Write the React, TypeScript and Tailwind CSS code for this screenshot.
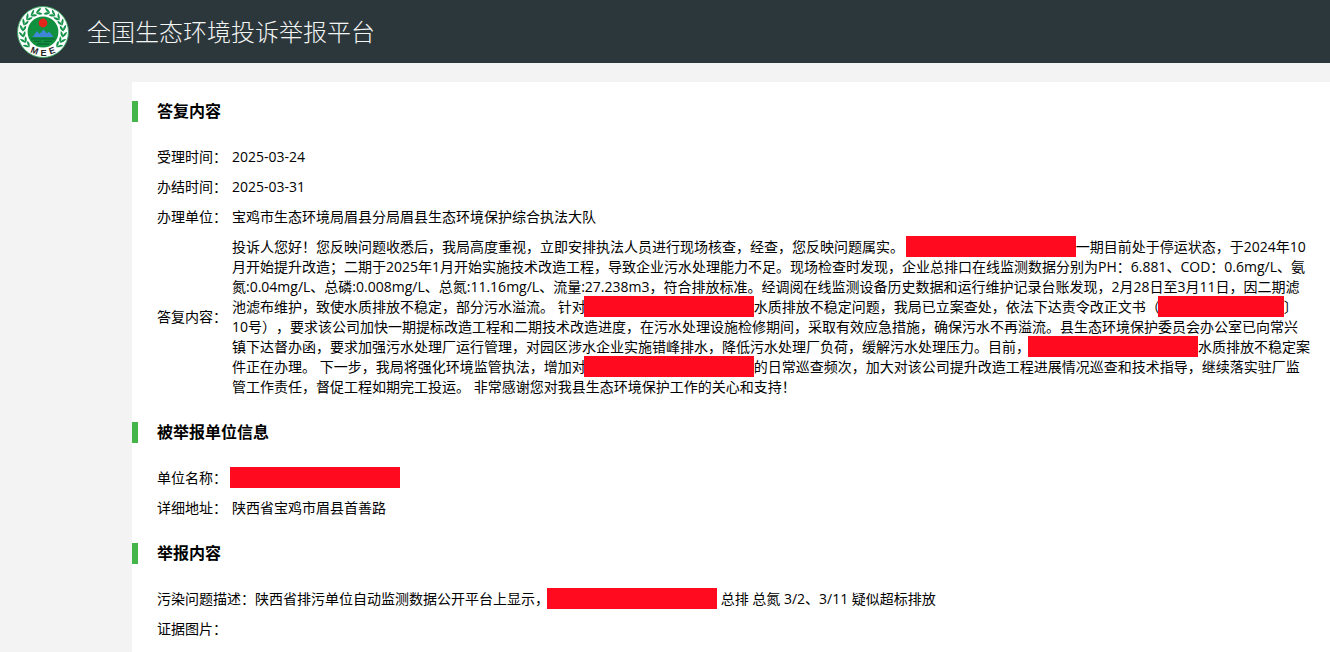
import React from 'react';

// Angles (degrees clockwise from the top) of the leaves on one side of the wreath
const leafAngles = [12, 29, 46, 63, 80, 97, 114, 130];

const Logo = () => (
  <svg viewBox="0 0 52 52" className="w-[52px] h-[52px] shrink-0" aria-hidden="true">
    <circle cx="26" cy="26" r="25.5" fill="#fff" stroke="#3fa565" strokeWidth="1" />
    {[1, -1].map((side) => (
      <g key={side} transform={`translate(26 26) scale(${side} 1)`} fill="#14934a">
        {leafAngles.map((angle) => (
          <g key={angle} transform={`rotate(${angle}) translate(0 -20.4) scale(1.15)`}>
            <path d="M2.6 0.3 C1.6 -1.4 -0.4 -3 -2.6 -3.2 C-2.2 -1.2 0 0.6 2.6 0.3Z" />
            <path d="M2.6 0.3 C1 2.4 -0.8 2.9 -2.8 2.4 C-2 0.8 0.4 -0.4 2.6 0.3Z" />
          </g>
        ))}
      </g>
    ))}
    <circle cx="26" cy="26" r="15.4" fill="#11913f" />
    <circle cx="26" cy="17" r="4.4" fill="#e4251b" />
    <path d="M15.5 31 L20 25 L22.5 28 L26.5 23.5 L30 27.5 L32 25.5 L36.5 31Z" fill="#3f86d8" />
    <path d="M14 32.8H38M17 35.4H24M27 35.4H35M20 38H32" stroke="#0a6b35" strokeWidth="1.3" fill="none" />
    <g fill="#222" fontFamily="Liberation Sans, sans-serif" fontSize="9" fontWeight="700" textAnchor="middle">
      <text transform="translate(16.5 47.5) rotate(20)">M</text>
      <text x="26.5" y="50">E</text>
      <text transform="translate(36 47.5) rotate(-20)">E</text>
    </g>
  </svg>
);

const Redacted = ({ short = false }: { short?: boolean }) => (
  <span
    className={`inline-block h-[21px] -my-2 -ml-0.5 align-[3px] bg-[#ff0a1e] ${short ? 'w-[126px]' : 'w-[170px]'}`}
  />
);

const Section = ({ title, children }: { title: string; children: React.ReactNode }) => (
  <section className="pb-5">
    <h2 className="mb-5 border-l-6 border-[#44b549] pl-[19px] text-base leading-[21px] font-bold">{title}</h2>
    <dl className="pl-[25px] pr-[19px]">{children}</dl>
  </section>
);

const Row = ({ label, wide = false, children }: { label: string; wide?: boolean; children?: React.ReactNode }) => (
  <div className="flex items-center py-[5px]">
    <dt className={`shrink-0 ${wide ? '' : 'w-[75px]'}`}>{label}：</dt>
    <dd className="min-w-0">{children}</dd>
  </div>
);

const App = () => {
  return (
    <div
      lang="zh-CN"
      className="flex min-h-screen flex-col bg-[#f3f3f3] text-sm leading-5 text-black font-['Open_Sans','Noto_Sans_CJK_SC',sans-serif] [text-spacing-trim:space-all]"
    >
      <header className="flex h-[63px] items-center gap-[18px] bg-[#2c373b] pl-[17px]">
        <Logo />
        <h1 className="text-2xl font-light text-[#f4f5f5]">全国生态环境投诉举报平台</h1>
      </header>

      <main className="mt-[19px] ml-[132px] grow bg-white pt-[19px]">
        <Section title="答复内容">
          <Row label="受理时间">2025-03-24</Row>
          <Row label="办结时间">2025-03-31</Row>
          <Row label="办理单位">宝鸡市生态环境局眉县分局眉县生态环境保护综合执法大队</Row>
          <Row label="答复内容">
            投诉人您好！您反映问题收悉后，我局高度重视，立即安排执法人员进行现场核查，经查，您反映问题属实。{' '}
            <Redacted />
            一期目前处于停运状态，于2024年10月开始提升改造；二期于2025年1月开始实施技术改造工程，导致企业污水处理能力不足。现场检查时发现，企业总排口在线监测数据分别为PH：6.881、COD：0.6mg/L、氨氮:0.04mg/L、总磷:0.008mg/L、总氮:11.16mg/L、流量:27.238m3，符合排放标准。经调阅在线监测设备历史数据和运行维护记录台账发现，2月28日至3月11日，因二期滤池滤布维护，致使水质排放不稳定，部分污水溢流。
            针对
            <Redacted />
            水质排放不稳定问题，我局已立案查处，依法下达责令改正文书（
            <Redacted short />
            〕10号），要求该公司加快一期提标改造工程和二期技术改造进度，在污水处理设施检修期间，采取有效应急措施，确保污水不再溢流。县生态环境保护委员会办公室已向常兴镇下达督办函，要求加强污水处理厂运行管理，对园区涉水企业实施错峰排水，降低污水处理厂负荷，缓解污水处理压力。目前，
            <Redacted />
            水质排放不稳定案件正在办理。 下一步，我局将强化环境监管执法，增加对
            <Redacted />
            的日常巡查频次，加大对该公司提升改造工程进展情况巡查和技术指导，继续落实驻厂监管工作责任，督促工程如期完工投运。
            非常感谢您对我县生态环境保护工作的关心和支持！
          </Row>
        </Section>

        <Section title="被举报单位信息">
          <Row label="单位名称">
            <Redacted />
          </Row>
          <Row label="详细地址">陕西省宝鸡市眉县首善路</Row>
        </Section>

        <Section title="举报内容">
          <Row label="污染问题描述" wide>
            陕西省排污单位自动监测数据公开平台上显示，
            <Redacted /> 总排 总氮 3/2、3/11 疑似超标排放
          </Row>
          <Row label="证据图片" />
        </Section>
      </main>
    </div>
  );
};

export default App;
